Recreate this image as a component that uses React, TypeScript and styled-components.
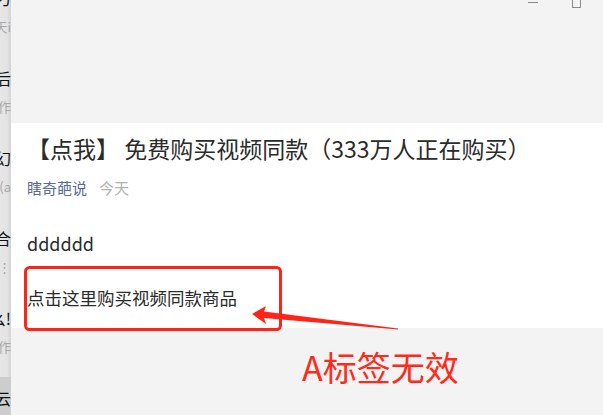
import React from "react";
import styled, { createGlobalStyle } from "styled-components";

const GlobalStyle = createGlobalStyle`
  html, body {
    margin: 0;
    padding: 0;
    background: #f3f3f3;
  }
  body {
    font-family: "Noto Sans CJK SC", "Noto Sans", sans-serif;
  }
`;

const Page = styled.div`
  position: relative;
  display: flex;
  width: 603px;
  height: 415px;
  overflow: hidden;
  background: #f3f3f3;
`;

const ChatStrip = styled.div`
  width: 11px;
  flex-shrink: 0;
  overflow: hidden;
  display: flex;
  flex-direction: column;
  background: linear-gradient(to right, #e6e6e6 0, #e4e4e4 7px, #d3d3d3 11px);
`;

const ChatItem = styled.div<{ $active?: boolean }>`
  height: 80px;
  flex-shrink: 0;
  margin-left: -189px;
  width: 200px;
  display: flex;
  flex-direction: column;
  align-items: flex-end;
  padding-top: 10px;
  box-sizing: border-box;
  background: ${(p) => (p.$active ? "#cdcdcd" : "transparent")};
`;

const ChatName = styled.div`
  font-size: 16px;
  line-height: 22px;
  color: #111;
  white-space: nowrap;
`;

const ChatPreview = styled.div`
  font-size: 13px;
  line-height: 20px;
  margin-top: 8px;
  color: #a8a8a8;
  white-space: nowrap;
`;

const Main = styled.div`
  flex: 1;
  display: flex;
  flex-direction: column;
`;

const TopBar = styled.div`
  height: 123px;
  flex-shrink: 0;
  display: flex;
  justify-content: flex-end;
  align-items: flex-start;
  gap: 34px;
  padding-right: 22px;
  background: #f3f3f3;
`;

const MinButton = styled.div`
  width: 10px;
  height: 1px;
  margin-top: 2px;
  background: #8a8a8a;
`;

const MaxButton = styled.div`
  width: 7px;
  height: 10px;
  margin-top: -4px;
  border: 1px solid #8a8a8a;
`;

const Article = styled.div`
  background: #ffffff;
  padding: 10px 16px 18px 16px;
  display: flex;
  flex-direction: column;
`;

const Title = styled.h1`
  margin: 0;
  font-size: 23px;
  line-height: 30px;
  font-weight: 400;
  color: #2b2b2b;
  white-space: nowrap;
`;

const Meta = styled.div`
  margin-top: 15px;
  display: flex;
  gap: 12px;
  font-size: 15px;
  line-height: 20px;
`;

const Author = styled.span`
  color: #576b95;
`;

const Time = styled.span`
  color: #b2b2b2;
`;

const Body = styled.p`
  margin: 32px 0 0;
  font-size: 18px;
  line-height: 26px;
  color: #2b2b2b;
`;

const Link = styled.a`
  margin-top: 30px;
  font-size: 17.5px;
  line-height: 24px;
  color: #2b2b2b;
  text-decoration: none;
`;

const Footer = styled.div`
  flex: 1;
  background: #f3f3f3;
  padding: 18px 0 0 291px;
`;

const Note = styled.div`
  font-size: 34px;
  line-height: 42px;
  color: #ff2a1a;
  white-space: nowrap;
`;

const Overlay = styled.svg`
  position: absolute;
  left: 0;
  top: 0;
  pointer-events: none;
`;

const chats = [
  { name: "设计刁", preview: "今天i" },
  { name: "产品后", preview: "工作" },
  { name: "小幻", preview: "周末(a" },
  { name: "组合", preview: "⋮" },
  { name: "幺!", preview: "工作" },
  { name: "云", preview: "" },
];

export default function App() {
  return (
    <>
      <GlobalStyle />
      <Page>
        <ChatStrip>
          <ChatItem style={{ marginTop: -23 }}>
            <ChatName>{chats[0].name}</ChatName>
            <ChatPreview>{chats[0].preview}</ChatPreview>
          </ChatItem>
          {chats.slice(1).map((c, i) => (
            <ChatItem key={i} $active={i === 4}>
              <ChatName>{c.name}</ChatName>
              <ChatPreview>{c.preview}</ChatPreview>
            </ChatItem>
          ))}
        </ChatStrip>
        <Main>
          <TopBar>
            <MinButton />
            <MaxButton />
          </TopBar>
          <Article>
            <Title>【点我】 免费购买视频同款（333万人正在购买）</Title>
            <Meta>
              <Author>瞎奇葩说</Author>
              <Time>今天</Time>
            </Meta>
            <Body>dddddd</Body>
            <Link href="#">点击这里购买视频同款商品</Link>
          </Article>
          <Footer>
            <Note>A标签无效</Note>
          </Footer>
        </Main>
        <Overlay width="603" height="415" viewBox="0 0 603 415">
          <rect
            x="25.5"
            y="267.5"
            width="255"
            height="62"
            rx="4"
            fill="none"
            stroke="#ff2418"
            strokeWidth="3"
          />
          <polygon
            points="252,314 266,306 264,311.5 398,328.5 398,329.5 264,318 266,324"
            fill="#ff2418"
          />
        </Overlay>
      </Page>
    </>
  );
}
